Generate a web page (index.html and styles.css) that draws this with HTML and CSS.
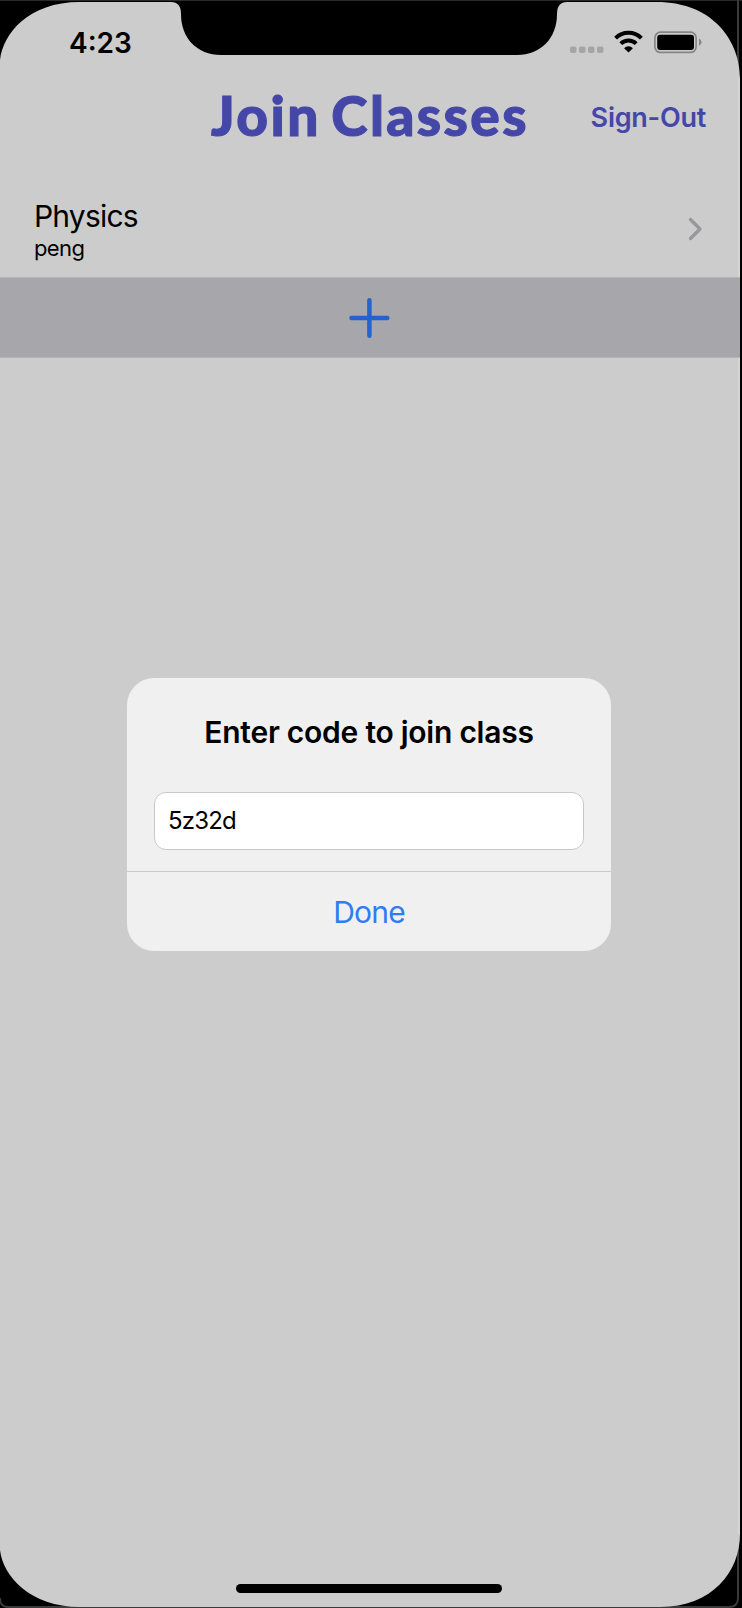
FILE: index.html
```html
<!DOCTYPE html>
<html lang="en">
<head>
<meta charset="utf-8">
<title>Join Classes</title>
<link rel="stylesheet" href="styles.css">
</head>
<body>
<div class="device">
  <svg class="frame" viewBox="0 0 742 1608" aria-hidden="true">
    <rect width="742" height="1608" fill="#000"/>
    <rect width="742" height="1" fill="#292a25"/>
    <path d="M738 0V1598Q738 1607 729 1607H8Q0 1607 0 1598" fill="none" stroke="#3b393a" stroke-width="2"/>
    <path d="M0 60C3 34 28 2 80 2H171Q181 2 181 14C181 38 197 55 221 55H517C541 55 557 38 557 14Q557 2 567 2H656C716 2 740 44 740 78V1534C740 1572 712 1607 660 1607H80C30 1607 3 1576 0 1550Z" fill="#ccc"/>
    <path d="M739 78V1534" stroke="#d5d5d5" stroke-width="2"/>
  </svg>
  <div class="screen">
    <div class="status">
      <span class="time">4:23</span>
      <svg class="indicators" viewBox="0 0 134 24" width="134" height="24" aria-hidden="true">
        <g fill="#a5a5a5"><rect x="0" y="16.5" width="6.5" height="6.5" rx="1.8"/><rect x="9" y="16.5" width="6.5" height="6.5" rx="1.8"/><rect x="18" y="16.5" width="6.5" height="6.5" rx="1.8"/><rect x="27" y="16.5" width="6.5" height="6.5" rx="1.8"/></g>
        <g fill="none" stroke="#000" stroke-width="4"><path d="M45.6 8.2A18.2 18.2 0 0 1 71.4 8.2"/><path d="M50.8 13.6A11 11 0 0 1 66.2 13.6"/></g>
        <path d="M58.5 22.6L54.1 18.2A6 6 0 0 1 62.9 18.2Z"/>
        <rect x="84.9" y="2.2" width="41.2" height="20.2" rx="5.5" fill="none" stroke="#858585" stroke-width="1.7"/>
        <rect x="87.2" y="4.7" width="36.8" height="15.2" rx="3"/>
        <path d="M129 8.5Q131.5 9.8 131.5 12.3T129 16.1Z" fill="#858585"/>
      </svg>
    </div>
    <header class="header">
      <h1 class="title">Join Classes</h1>
      <span class="signout">Sign-Out</span>
    </header>
    <div class="row">
      <div><div class="name">Physics</div><div class="teacher">peng</div></div>
      <svg class="chevron" viewBox="0 0 16 26" width="16" height="26" aria-hidden="true"><path d="M2.5 3.5L12 13L2.5 22.5" fill="none" stroke="#98989a" stroke-width="3.3" stroke-linecap="round" stroke-linejoin="round"/></svg>
    </div>
    <div class="add">
      <svg viewBox="0 0 42 42" width="42" height="42" aria-hidden="true"><path d="M20.4 3.2V38.8M2.5 21H38.3" stroke="#2463cf" stroke-width="4.5" stroke-linecap="round"/></svg>
    </div>
    <div class="dialog">
      <div class="prompt">Enter code to join class</div>
      <div class="code">5z32d</div>
      <div class="done">Done</div>
    </div>
    <div class="home"></div>
  </div>
</div>
</body>
</html>
```
FILE: styles.css
```css
body { margin: 0; background: #000; font-family: Inter, "Liberation Sans", sans-serif; color: #000; }
.device { position: relative; width: 742px; height: 1608px; overflow: hidden; }
.frame { position: absolute; inset: 0; width: 742px; height: 1608px; }
.screen { position: relative; display: flex; flex-direction: column; width: 740px; height: 1608px; }
.status { display: flex; justify-content: space-between; height: 55px; padding: 30px 36px 0 69px; box-sizing: border-box; }
.time { font-size: 28px; line-height: 26px; font-weight: 600; }
.header { display: grid; grid-template-columns: 1fr auto 1fr; align-items: center; height: 123px; padding: 0 34px; box-sizing: border-box; }
.title { grid-column: 2; margin: 0; font: 900 55px/118px Lato, sans-serif; letter-spacing: 2.4px; word-spacing: -5px; color: #4547a8; -webkit-text-stroke: 1.1px #4547a8; white-space: nowrap; padding-bottom: 3px; }
.signout { justify-self: end; padding-top: 1px; font-size: 27px; font-weight: 600; letter-spacing: -.25px; color: #4547a8; white-space: nowrap; }
.row { display: flex; justify-content: space-between; height: 99px; padding: 18px 36px 0 34px; box-sizing: border-box; }
.name { font-size: 30px; line-height: 40px; letter-spacing: -.8px; }
.teacher { font-size: 22px; line-height: 24px; letter-spacing: -.6px; }
.chevron { margin-top: 20px; }
.add { display: flex; justify-content: center; align-items: center; flex: none; height: 81px; box-sizing: border-box; background: #a7a6ab; border: solid #b5b5b7; border-width: 1px 0; }
.dialog { width: 484px; height: 273px; margin: 320px 0 0 127px; flex: none; background: #f0f0f0; border-radius: 27px; text-align: center; overflow: hidden; }
.prompt { height: 114px; font-size: 30px; line-height: 108px; font-weight: 600; letter-spacing: -.25px; white-space: nowrap; }
.code { height: 58px; margin: 0 27px 21px; padding-left: 13px; box-sizing: border-box; border: 1px solid #c8c8c8; border-radius: 12px; background: #fff; font-size: 24px; line-height: 56px; letter-spacing: -.8px; text-align: left; }
.done { height: 80px; border-top: 1px solid #c8c9c8; box-sizing: border-box; font-size: 30px; line-height: 80px; letter-spacing: -.8px; color: #2f7cf6; }
.home { width: 266px; height: 9px; margin: auto 0 15px 236px; border-radius: 5px; background: #000; }
```
